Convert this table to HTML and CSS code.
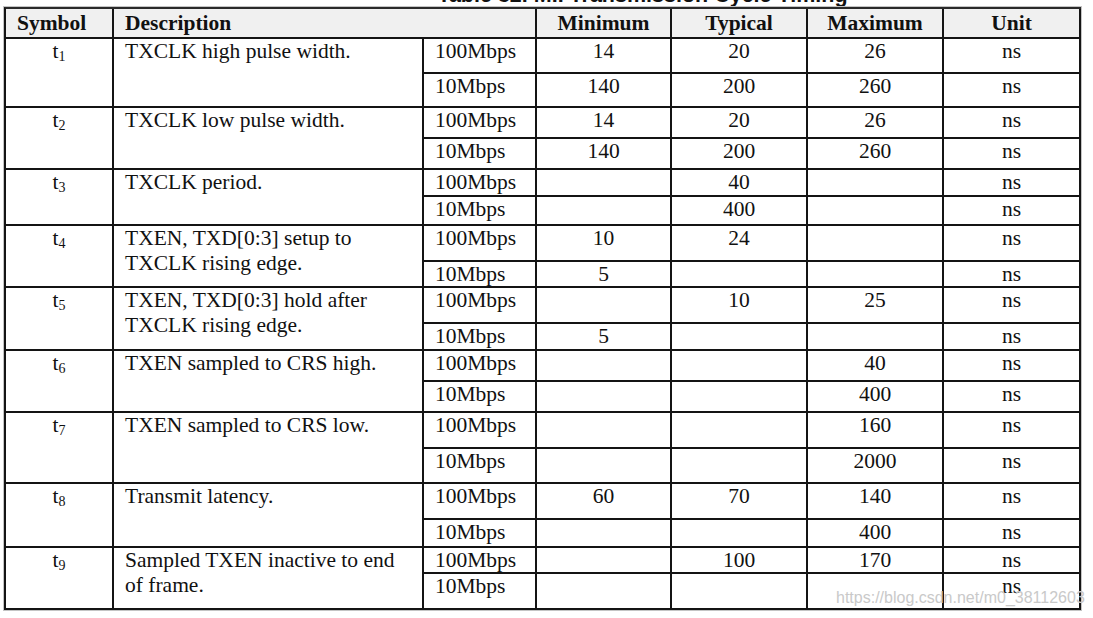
FILE: index.html
```html
<!DOCTYPE html>
<html>
<head>
<meta charset="utf-8">
<link rel="stylesheet" href="styles.css">
</head>
<body>
<div class="page">
  <div class="title">Table 32. MII Transmission Cycle Timing</div>
  <div class="grid">
    <div class="c hd hd-left">Symbol</div>
    <div class="c hd hd-left span2">Description</div>
    <div class="c hd">Minimum</div>
    <div class="c hd">Typical</div>
    <div class="c hd">Maximum</div>
    <div class="c hd">Unit</div>

    <div class="c sym rs">t<sub>1</sub></div>
    <div class="c desc rs">TXCLK high pulse width.</div>
    <div class="c spd">100Mbps</div><div class="c v">14</div><div class="c v">20</div><div class="c v">26</div><div class="c v">ns</div>
    <div class="c spd">10Mbps</div><div class="c v">140</div><div class="c v">200</div><div class="c v">260</div><div class="c v">ns</div>

    <div class="c sym rs">t<sub>2</sub></div>
    <div class="c desc rs">TXCLK low pulse width.</div>
    <div class="c spd">100Mbps</div><div class="c v">14</div><div class="c v">20</div><div class="c v">26</div><div class="c v">ns</div>
    <div class="c spd">10Mbps</div><div class="c v">140</div><div class="c v">200</div><div class="c v">260</div><div class="c v">ns</div>

    <div class="c sym rs">t<sub>3</sub></div>
    <div class="c desc rs">TXCLK period.</div>
    <div class="c spd">100Mbps</div><div class="c v"></div><div class="c v">40</div><div class="c v"></div><div class="c v">ns</div>
    <div class="c spd">10Mbps</div><div class="c v"></div><div class="c v">400</div><div class="c v"></div><div class="c v">ns</div>

    <div class="c sym rs">t<sub>4</sub></div>
    <div class="c desc rs">TXEN, TXD[0:3] setup to TXCLK rising edge.</div>
    <div class="c spd">100Mbps</div><div class="c v">10</div><div class="c v">24</div><div class="c v"></div><div class="c v">ns</div>
    <div class="c spd">10Mbps</div><div class="c v">5</div><div class="c v"></div><div class="c v"></div><div class="c v">ns</div>

    <div class="c sym rs">t<sub>5</sub></div>
    <div class="c desc rs">TXEN, TXD[0:3] hold after TXCLK rising edge.</div>
    <div class="c spd">100Mbps</div><div class="c v"></div><div class="c v">10</div><div class="c v">25</div><div class="c v">ns</div>
    <div class="c spd">10Mbps</div><div class="c v">5</div><div class="c v"></div><div class="c v"></div><div class="c v">ns</div>

    <div class="c sym rs">t<sub>6</sub></div>
    <div class="c desc rs">TXEN sampled to CRS high.</div>
    <div class="c spd">100Mbps</div><div class="c v"></div><div class="c v"></div><div class="c v">40</div><div class="c v">ns</div>
    <div class="c spd">10Mbps</div><div class="c v"></div><div class="c v"></div><div class="c v">400</div><div class="c v">ns</div>

    <div class="c sym rs">t<sub>7</sub></div>
    <div class="c desc rs">TXEN sampled to CRS low.</div>
    <div class="c spd">100Mbps</div><div class="c v"></div><div class="c v"></div><div class="c v">160</div><div class="c v">ns</div>
    <div class="c spd">10Mbps</div><div class="c v"></div><div class="c v"></div><div class="c v">2000</div><div class="c v">ns</div>

    <div class="c sym rs">t<sub>8</sub></div>
    <div class="c desc rs">Transmit latency.</div>
    <div class="c spd">100Mbps</div><div class="c v">60</div><div class="c v">70</div><div class="c v">140</div><div class="c v">ns</div>
    <div class="c spd">10Mbps</div><div class="c v"></div><div class="c v"></div><div class="c v">400</div><div class="c v">ns</div>

    <div class="c sym rs">t<sub>9</sub></div>
    <div class="c desc rs">Sampled TXEN inactive to end of frame.</div>
    <div class="c spd">100Mbps</div><div class="c v"></div><div class="c v">100</div><div class="c v">170</div><div class="c v">ns</div>
    <div class="c spd">10Mbps</div><div class="c v"></div><div class="c v"></div><div class="c v"></div><div class="c v">ns</div>
  </div>
  <div class="wm">https://blog.csdn.net/m0_38112603</div>
</div>
</body>
</html>
```
FILE: styles.css
```css
html, body {
  margin: 0;
  padding: 0;
  background: #ffffff;
}

.page {
  position: relative;
  display: flex;
  flex-direction: column;
  align-items: flex-start;
  padding: 0 4px;
  width: 1093px;
  height: 618px;
  box-sizing: border-box;
  overflow: hidden;
}

.title {
  width: 1277px;
  margin-top: -15px;
  height: 22px;
  line-height: 21px;
  text-align: center;
  font-family: "Liberation Sans", Arial, sans-serif;
  font-weight: bold;
  font-size: 21.5px;
  color: #111;
  white-space: nowrap;
}

.grid {
  display: grid;
  grid-template-columns: 108px 310px 113px 135px 136px 136px 137px;
  grid-template-rows: 30px 35px 34px 31px 31px 27px 29px 36px 26px 36px 27px 31px 31px 36px 35px 36px 28px 26px 36px;
  border-left: 2px solid #141414;
  border-top: 2px solid #2a2a2a;
  box-shadow: 0 0 0 1px #c4c4c4;
  font-family: "Liberation Serif", "Times New Roman", serif;
  font-size: 21.5px;
  line-height: 25px;
  color: #111;
}

.c {
  box-sizing: border-box;
  border-right: 2px solid #141414;
  border-bottom: 2px solid #141414;
  white-space: nowrap;
  text-align: center;
}

.hd {
  background: #f0f0f0;
  font-weight: bold;
  padding-top: 2px;
}

.hd-left {
  text-align: left;
  padding-left: 11px;
}

.span2 {
  grid-column: span 2;
}

.rs {
  grid-row: span 2;
}

.sym sub {
  font-size: 14px;
  vertical-align: -3px;
  line-height: 0;
}

.desc {
  text-align: left;
  white-space: normal;
  padding: 0 12px 0 11px;
}

.spd {
  text-align: left;
  padding-left: 11px;
}

.wm {
  position: absolute;
  left: 836px;
  top: 589px;
  font-family: "Liberation Sans", Arial, sans-serif;
  font-size: 16px;
  line-height: 18px;
  color: #c9c9c9;
  white-space: nowrap;
}
```
